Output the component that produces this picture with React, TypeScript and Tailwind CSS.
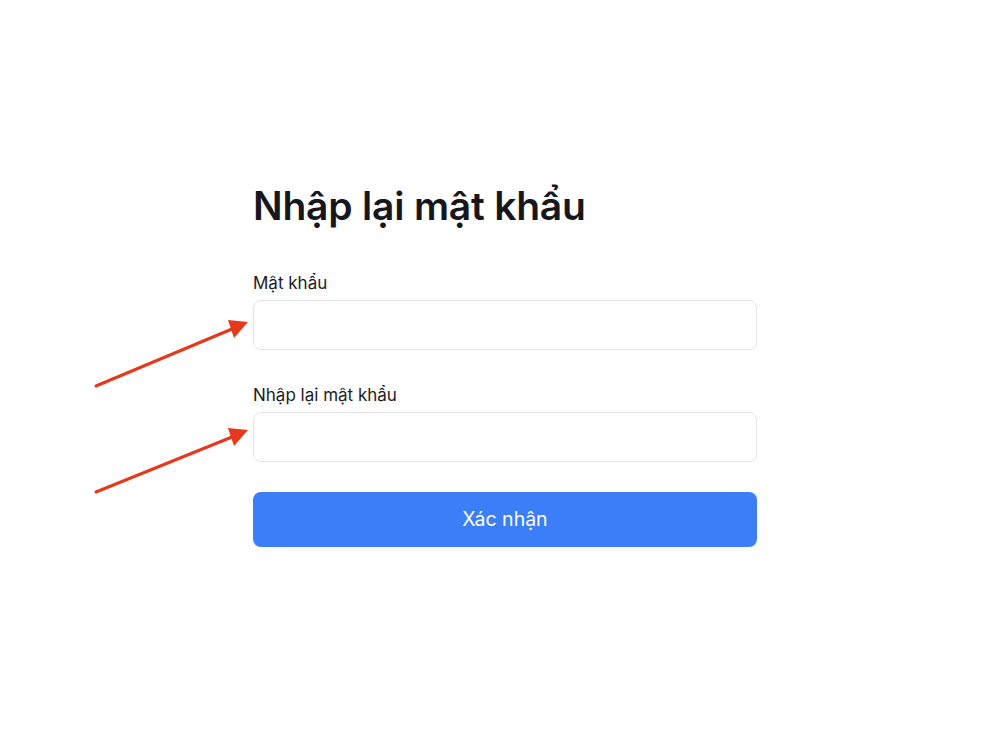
import React from "react";

export default function App() {
  return (
    <div className="relative w-[1000px] h-[732px] bg-white overflow-hidden" style={{ fontFamily: "Inter, 'Noto Sans', sans-serif" }}>
      <div className="pl-[253px] pt-[178px] w-[757px]">
        <h1 className="text-[39px] leading-[56px] font-semibold text-[#16161d] tracking-[-0.2px]">Nhập lại mật khẩu</h1>
        <div className="mt-[39px]">
          <label className="block text-[17px] leading-[20px] text-[#1c1c22]">Mật khẩu</label>
          <input type="password" className="mt-[7px] block w-[504px] h-[50px] rounded-[8px] border border-[#e4e4e7] bg-white outline-none" />
        </div>
        <div className="mt-[35px]">
          <label className="block text-[17px] leading-[20px] text-[#1c1c22]">Nhập lại mật khẩu</label>
          <input type="password" className="mt-[7px] block w-[504px] h-[50px] rounded-[8px] border border-[#e4e4e7] bg-white outline-none" />
        </div>
        <button className="mt-[30px] w-[504px] h-[55px] rounded-[8px] bg-[#3b7ef7] text-white text-[19.5px]">Xác nhận</button>
      </div>
      <svg className="absolute left-0 top-0" width="1000" height="732" viewBox="0 0 1000 732">
        <g stroke="#e8381c" strokeWidth="3" strokeLinecap="round" fill="#e8381c">
          <line x1="96" y1="386" x2="232" y2="329" />
          <polygon points="248,322 228,320 234,338" stroke="none" />
          <line x1="96" y1="492" x2="232" y2="437" />
          <polygon points="248,430 228,428 234,446" stroke="none" />
        </g>
      </svg>
    </div>
  );
}
